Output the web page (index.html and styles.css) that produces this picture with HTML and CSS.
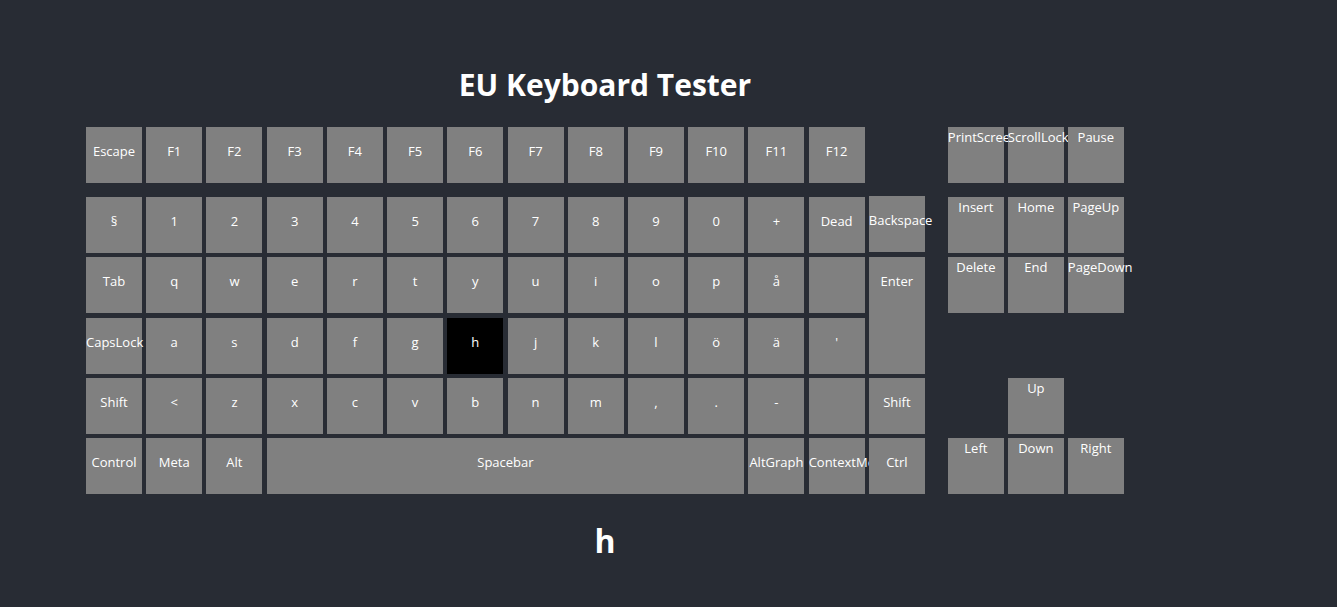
FILE: index.html
```html
<!DOCTYPE html>
<html lang="en">
<head>
<meta charset="utf-8">
<title>EU Keyboard Tester</title>
<link rel="stylesheet" href="styles.css">
</head>
<body>
<div class="app">
  <h1 class="title">EU Keyboard Tester</h1>
  <div class="keyboard">
    <div class="main">
      <div class="fn-row">
        <div class="key">Escape</div>
        <div class="key">F1</div>
        <div class="key">F2</div>
        <div class="key">F3</div>
        <div class="key">F4</div>
        <div class="key">F5</div>
        <div class="key">F6</div>
        <div class="key">F7</div>
        <div class="key">F8</div>
        <div class="key">F9</div>
        <div class="key">F10</div>
        <div class="key">F11</div>
        <div class="key">F12</div>
      </div>
      <div class="alpha">
        <div class="key">§</div>
        <div class="key">1</div>
        <div class="key">2</div>
        <div class="key">3</div>
        <div class="key">4</div>
        <div class="key">5</div>
        <div class="key">6</div>
        <div class="key">7</div>
        <div class="key">8</div>
        <div class="key">9</div>
        <div class="key">0</div>
        <div class="key">+</div>
        <div class="key">Dead</div>
        <div class="key key-backspace">Backspace</div>

        <div class="key">Tab</div>
        <div class="key">q</div>
        <div class="key">w</div>
        <div class="key">e</div>
        <div class="key">r</div>
        <div class="key">t</div>
        <div class="key">y</div>
        <div class="key">u</div>
        <div class="key">i</div>
        <div class="key">o</div>
        <div class="key">p</div>
        <div class="key">å</div>
        <div class="key"></div>
        <div class="key key-enter">Enter</div>

        <div class="key">CapsLock</div>
        <div class="key">a</div>
        <div class="key">s</div>
        <div class="key">d</div>
        <div class="key">f</div>
        <div class="key">g</div>
        <div class="key key-active">h</div>
        <div class="key">j</div>
        <div class="key">k</div>
        <div class="key">l</div>
        <div class="key">ö</div>
        <div class="key">ä</div>
        <div class="key">'</div>

        <div class="key">Shift</div>
        <div class="key">&lt;</div>
        <div class="key">z</div>
        <div class="key">x</div>
        <div class="key">c</div>
        <div class="key">v</div>
        <div class="key">b</div>
        <div class="key">n</div>
        <div class="key">m</div>
        <div class="key">,</div>
        <div class="key">.</div>
        <div class="key">-</div>
        <div class="key"></div>
        <div class="key">Shift</div>

        <div class="key">Control</div>
        <div class="key">Meta</div>
        <div class="key">Alt</div>
        <div class="key key-space">Spacebar</div>
        <div class="key">AltGraph</div>
        <div class="key">ContextMenu</div>
        <div class="key">Ctrl</div>
      </div>
    </div>
    <div class="nav">
      <div class="nav-top">
        <div class="key key-top">PrintScreen</div>
        <div class="key key-top">ScrollLock</div>
        <div class="key key-top">Pause</div>
      </div>
      <div class="nav-grid">
        <div class="key key-top">Insert</div>
        <div class="key key-top">Home</div>
        <div class="key key-top">PageUp</div>
        <div class="key key-top">Delete</div>
        <div class="key key-top">End</div>
        <div class="key key-top">PageDown</div>
        <div class="key key-top key-up">Up</div>
        <div class="key key-top key-left">Left</div>
        <div class="key key-top key-down">Down</div>
        <div class="key key-top key-right">Right</div>
      </div>
    </div>
  </div>
  <div class="pressed">h</div>
</div>
</body>
</html>
```

FILE: styles.css
```css
html, body {
  margin: 0;
  padding: 0;
  background: #282c34;
}

body {
  font-family: "Open Sans", "Noto Sans", sans-serif;
  color: #ffffff;
}

.app {
  margin-left: 86px;
  width: 1038px;
}

.title {
  margin: 65px 0 22px;
  font-size: 30px;
  line-height: 40px;
  font-weight: 700;
  text-align: center;
}

.keyboard {
  display: flex;
  align-items: flex-start;
  gap: 23px;
}

.main {
  display: flex;
  flex-direction: column;
}

.fn-row {
  display: grid;
  grid-template-columns: repeat(14, 56px);
  column-gap: 4.23px;
  margin-bottom: 14px;
}

.alpha {
  display: grid;
  grid-template-columns: repeat(14, 56px);
  grid-template-rows: repeat(5, 56px);
  column-gap: 4.23px;
  row-gap: 4.25px;
}

.key {
  box-sizing: border-box;
  width: 56px;
  height: 56px;
  min-width: 0;
  background: #808080;
  color: #ffffff;
  font-size: 13px;
  line-height: 18px;
  padding-top: 15px;
  text-align: center;
  white-space: nowrap;
}

.key-top {
  padding-top: 1px;
}

.key-active {
  background: #000000;
}

.key-backspace {
  margin-top: -1px;
}

.key-enter {
  grid-column: 14;
  grid-row: 2 / span 2;
  height: auto;
}

.key-space {
  grid-column: span 8;
  width: auto;
}

.nav {
  display: flex;
  flex-direction: column;
}

.nav-top {
  display: grid;
  grid-template-columns: repeat(3, 56px);
  column-gap: 4px;
  margin-bottom: 14px;
}

.nav-grid {
  display: grid;
  grid-template-columns: repeat(3, 56px);
  grid-template-rows: repeat(5, 56px);
  column-gap: 4px;
  row-gap: 4.25px;
}

.key-up {
  grid-column: 2;
  grid-row: 4;
}

.key-left {
  grid-column: 1;
  grid-row: 5;
}

.key-down {
  grid-column: 2;
  grid-row: 5;
}

.key-right {
  grid-column: 3;
  grid-row: 5;
}

.pressed {
  margin-top: 25px;
  font-size: 32px;
  line-height: 44px;
  font-weight: 700;
  text-align: center;
}
```
